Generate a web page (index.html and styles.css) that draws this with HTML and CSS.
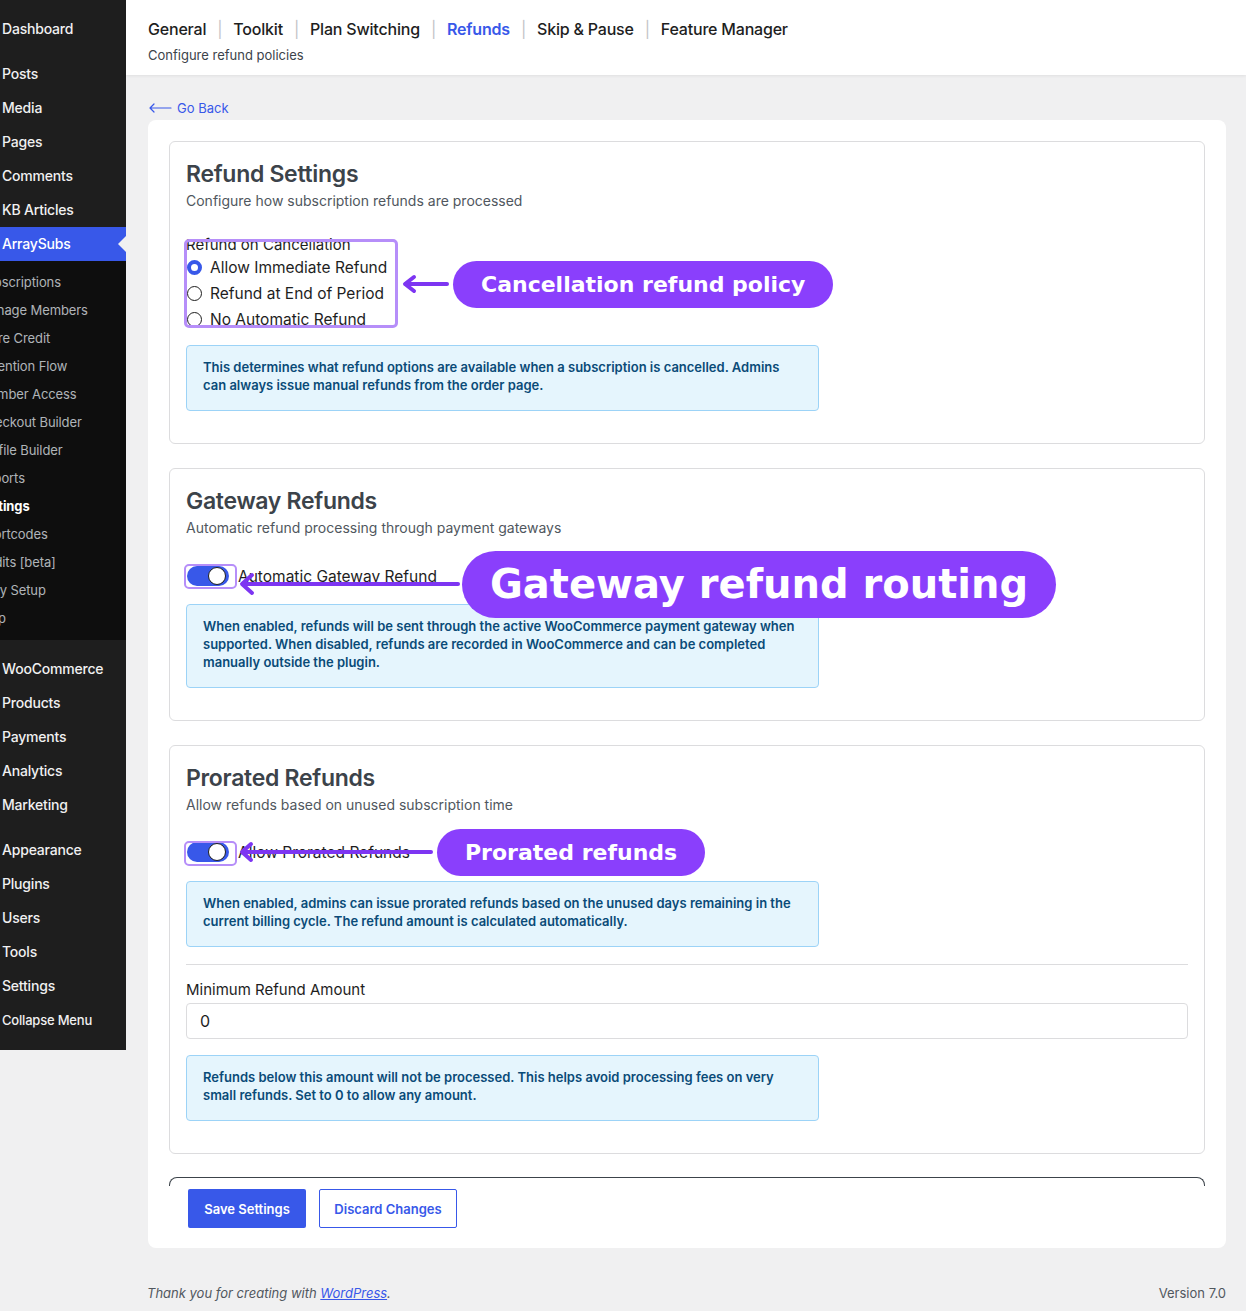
FILE: index.html
```html
<!DOCTYPE html>
<html lang="en">
<head>
<meta charset="utf-8">
<title>Refunds ‹ ArraySubs</title>
<link rel="stylesheet" href="styles.css">
</head>
<body>
<div class="admin">
  <nav class="sidebar">
    <ul class="menu">
      <li class="item">Dashboard</li>
      <li class="sep"></li>
      <li class="item">Posts</li>
      <li class="item">Media</li>
      <li class="item">Pages</li>
      <li class="item">Comments</li>
      <li class="item">KB Articles</li>
      <li class="item current">ArraySubs</li>
      <li>
        <ul class="sub">
          <li>Subscriptions</li>
          <li>Manage Members</li>
          <li>Store Credit</li>
          <li>Retention Flow</li>
          <li>Member Access</li>
          <li>Checkout Builder</li>
          <li>Profile Builder</li>
          <li>Reports</li>
          <li class="on">Settings</li>
          <li>Shortcodes</li>
          <li>Audits [beta]</li>
          <li>Easy Setup</li>
          <li>Help</li>
        </ul>
      </li>
      <li class="sep wide"></li>
      <li class="item">WooCommerce</li>
      <li class="item">Products</li>
      <li class="item">Payments</li>
      <li class="item">Analytics</li>
      <li class="item">Marketing</li>
      <li class="sep"></li>
      <li class="item">Appearance</li>
      <li class="item">Plugins</li>
      <li class="item">Users</li>
      <li class="item">Tools</li>
      <li class="item">Settings</li>
      <li class="item small">Collapse Menu</li>
    </ul>
  </nav>

  <div class="main">
    <header class="topbar">
      <nav class="tabs">
        <a class="tab">General</a><span class="bar">|</span>
        <a class="tab">Toolkit</a><span class="bar">|</span>
        <a class="tab">Plan Switching</a><span class="bar">|</span>
        <a class="tab active">Refunds</a><span class="bar">|</span>
        <a class="tab">Skip &amp; Pause</a><span class="bar">|</span>
        <a class="tab">Feature Manager</a>
      </nav>
      <p class="tagline">Configure refund policies</p>
    </header>

    <div class="content">
      <a class="back">
        <svg width="24" height="10" viewBox="0 0 24 10" aria-hidden="true">
          <path d="M23 5H2M6 1L2 5l4 4" fill="none" stroke="#3858e9" stroke-width="1.2" stroke-linecap="round" stroke-linejoin="round"/>
        </svg>
        <span>Go Back</span>
      </a>

      <div class="panel">
        <section class="card">
          <h2>Refund Settings</h2>
          <p class="desc">Configure how subscription refunds are processed</p>
          <div class="group">
            <div class="group-label">Refund on Cancellation</div>
            <label class="radio"><span class="dot checked"></span>Allow Immediate Refund</label>
            <label class="radio"><span class="dot"></span>Refund at End of Period</label>
            <label class="radio"><span class="dot"></span>No Automatic Refund</label>
          </div>
          <div class="info tight">This determines what refund options are available when a subscription is cancelled. Admins can always issue manual refunds from the order page.</div>
        </section>

        <section class="card">
          <h2>Gateway Refunds</h2>
          <p class="desc">Automatic refund processing through payment gateways</p>
          <div class="toggle-row">
            <span class="switch"><span class="knob"></span></span>
            <span class="toggle-label">Automatic Gateway Refund</span>
          </div>
          <div class="info after-toggle">When enabled, refunds will be sent through the active WooCommerce payment gateway when supported. When disabled, refunds are recorded in WooCommerce and can be completed manually outside the plugin.</div>
        </section>

        <section class="card">
          <h2>Prorated Refunds</h2>
          <p class="desc">Allow refunds based on unused subscription time</p>
          <div class="toggle-row second">
            <span class="switch"><span class="knob"></span></span>
            <span class="toggle-label">Allow Prorated Refunds</span>
          </div>
          <div class="info after-toggle2">When enabled, admins can issue prorated refunds based on the unused days remaining in the current billing cycle. The refund amount is calculated automatically.</div>
          <hr class="rule">
          <label class="field-label" for="min-amount">Minimum Refund Amount</label>
          <input class="field" id="min-amount" type="text" value="0">
          <div class="info after-field">Refunds below this amount will not be processed. This helps avoid processing fees on very small refunds. Set to 0 to allow any amount.</div>
        </section>

        <div class="actions">
          <button class="btn primary">Save Settings</button>
          <button class="btn outline">Discard Changes</button>
        </div>
      </div>

      <footer class="foot">
        <span class="thanks">Thank you for creating with <a>WordPress</a>.</span>
        <span class="version">Version 7.0</span>
      </footer>
    </div>
  </div>
</div>

<div class="notes" aria-hidden="true">
  <div class="mark mark-radios"></div>
  <div class="mark mark-toggle1"></div>
  <div class="mark mark-toggle2"></div>
  <svg class="arrows" width="1246" height="1311" viewBox="0 0 1246 1311">
    <g fill="none" stroke="#7d35f2" stroke-width="4" stroke-linecap="round" stroke-linejoin="round">
      <path d="M447 284H406"/>
      <path d="M414 277l-9 7 9 7"/>
      <path d="M458 584H243"/>
      <path d="M252 575l-10 9 10 9"/>
      <path d="M431 852H243"/>
      <path d="M251 844l-9 8 9 8"/>
    </g>
  </svg>
  <div class="tag tag-policy">Cancellation refund policy</div>
  <div class="tag tag-gateway">Gateway refund routing</div>
  <div class="tag tag-prorated">Prorated refunds</div>
</div>
</body>
</html>
```

FILE: styles.css
```css
* { box-sizing: border-box; }

html, body { margin: 0; }

body {
  position: relative;
  min-height: 1311px;
  background: #f0f0f1;
  color: #1e1e1e;
  font-family: Inter, Roboto, "Liberation Sans", sans-serif;
}

.admin {
  display: flex;
  align-items: flex-start;
}

/* ---------- admin sidebar ---------- */
.sidebar {
  flex: none;
  width: 126px;
  padding: 12px 0 13px;
  background: #1e1e1e;
  overflow: hidden;
}

.menu {
  list-style: none;
  margin: 0 0 0 -34px;
  padding: 0;
  width: 160px;
}

.item {
  position: relative;
  height: 34px;
  line-height: 34px;
  padding-left: 36px;
  font-size: 14px;
  font-weight: 500;
  letter-spacing: -0.2px;
  color: #f0f0f1;
  white-space: nowrap;
}

.item.small { font-size: 13px; }

.item.current {
  background: #3858e9;
  color: #fff;
}

.item.current::after {
  content: "";
  position: absolute;
  right: 0;
  top: 9px;
  border: 8px solid transparent;
  border-right-color: #f0f0f1;
}

.sep { height: 11px; }
.sep.wide { height: 12px; }

.sub {
  list-style: none;
  margin: 0;
  padding: 7px 0 8px;
  background: #0e0e0e;
}

.sub li {
  height: 28px;
  line-height: 28px;
  padding-left: 12px;
  font-size: 13px;
  letter-spacing: -0.1px;
  color: rgba(240, 246, 252, 0.72);
  white-space: nowrap;
}

.sub li.on { color: #fff; font-weight: 700; }

/* ---------- main column ---------- */
.main { flex: 1; min-width: 0; }

.topbar {
  height: 75px;
  padding: 18px 22px 0;
  background: #fff;
  box-shadow: 0 1px 3px rgba(0, 0, 0, 0.07);
}

.tabs {
  display: flex;
  align-items: center;
  height: 22px;
  font-size: 16px;
  font-weight: 500;
  letter-spacing: -0.2px;
}

.tab { color: #1e1e1e; }
.tab.active { color: #3858e9; font-weight: 600; }

.bar {
  margin: 0 11px;
  color: #c3c4c7;
  font-weight: 400;
}

.tagline {
  margin: 6px 0 0;
  font-size: 13px;
  line-height: 18px;
  color: #3c434a;
}

.content { padding: 24px 20px 0 22px; }

.back {
  display: flex;
  align-items: center;
  gap: 5px;
  height: 18px;
  font-size: 13px;
  color: #3858e9;
}

.panel {
  margin-top: 3px;
  padding: 21px 21px 20px;
  background: #fff;
  border-radius: 8px;
}

.card {
  margin-bottom: 24px;
  padding: 16px 16px 32px;
  border: 1px solid #dcdcde;
  border-radius: 6px;
}

.card h2 {
  margin: 0;
  font-size: 23px;
  line-height: 32px;
  font-weight: 600;
  letter-spacing: -0.3px;
  color: #3c434a;
}

.desc {
  margin: 1px 0 0;
  font-size: 14px;
  line-height: 20px;
  color: #50575e;
}

.group { margin-top: 24px; }

.group-label {
  height: 19px;
  font-size: 15px;
  line-height: 19px;
  color: #1e1e1e;
}

.radio {
  display: flex;
  align-items: center;
  gap: 8px;
  height: 26px;
  padding-left: 1px;
  font-size: 15.5px;
  color: #1e1e1e;
}

.dot {
  flex: none;
  width: 15px;
  height: 15px;
  border: 1px solid #1e1e1e;
  border-radius: 50%;
  background: #fff;
}

.dot.checked { border: 4px solid #3858e9; }

.info {
  max-width: 633px;
  padding: 12px 16px 16px;
  background: #e5f5fd;
  border: 1px solid #9cd3f7;
  border-radius: 4px;
  font-size: 13px;
  line-height: 18px;
  font-weight: 600;
  color: #0a4b78;
}

.info.tight { margin-top: 13px; }
.info.after-toggle { margin-top: 18px; }
.info.after-toggle2 { margin-top: 19px; }
.info.after-field { margin-top: 16px; }

.toggle-row {
  display: flex;
  align-items: center;
  height: 20px;
  margin-top: 28px;
}

.toggle-row.second { margin-top: 27px; }

.switch {
  position: relative;
  flex: none;
  width: 42px;
  height: 20px;
  margin-left: 1px;
  border-radius: 10px;
  background: #3858e9;
}

.knob {
  position: absolute;
  right: 3px;
  top: 1px;
  width: 18px;
  height: 18px;
  border: 1.5px solid #1e1e1e;
  border-radius: 50%;
  background: #fff;
}

.toggle-label {
  margin-left: 9px;
  font-size: 15.5px;
  color: #1e1e1e;
}

.rule {
  margin: 17px 0 0;
  border: 0;
  border-top: 1px solid #dcdcde;
}

.field-label {
  display: block;
  margin-top: 15px;
  font-size: 15px;
  line-height: 20px;
}

.field {
  display: block;
  width: 100%;
  height: 36px;
  margin-top: 3px;
  padding: 0 13px;
  border: 1px solid #dcdcde;
  border-radius: 4px;
  font-family: inherit;
  font-size: 16px;
  color: #1e1e1e;
}

.actions {
  position: relative;
  display: flex;
  gap: 13px;
  padding: 11px 0 0 19px;
}

.actions::before {
  content: "";
  position: absolute;
  left: 0;
  right: 0;
  top: -1px;
  height: 8px;
  border: 1px solid #3c434a;
  border-bottom: 0;
  border-radius: 8px 8px 0 0;
}

.btn {
  height: 39px;
  padding: 0;
  border-radius: 2px;
  font-family: inherit;
  font-size: 13px;
  font-weight: 600;
}

.btn.primary {
  width: 118px;
  border: 0;
  background: #3858e9;
  color: #fff;
}

.btn.outline {
  width: 138px;
  border: 1px solid #3858e9;
  background: #fff;
  color: #3858e9;
}

.foot {
  display: flex;
  justify-content: space-between;
  margin: 36px 0 0 -1px;
  font-size: 13px;
  line-height: 18px;
  color: #50575e;
}

.thanks { font-style: italic; }
.thanks a { color: #3858e9; text-decoration: underline; }

/* ---------- annotation layer ---------- */
.notes {
  position: absolute;
  left: 0;
  top: 0;
  width: 1246px;
  height: 1311px;
  pointer-events: none;
}

.arrows { position: absolute; left: 0; top: 0; }

.mark {
  position: absolute;
  border: 3px solid #b68ef9;
  border-radius: 5px;
}

.mark-radios { left: 184px; top: 239px; width: 214px; height: 89px; }
.mark-toggle1 { left: 184px; top: 564px; width: 53px; height: 25px; border-width: 2px; }
.mark-toggle2 { left: 184px; top: 841px; width: 53px; height: 25px; border-width: 2px; }

.tag {
  position: absolute;
  padding: 0 28px;
  border-radius: 999px;
  background: #8a3ffc;
  color: #fff;
  font-family: "DejaVu Sans", sans-serif;
  font-weight: 700;
  white-space: nowrap;
}

.tag-policy { left: 453px; top: 261px; height: 47px; line-height: 47px; font-size: 22px; }
.tag-gateway { left: 462px; top: 551px; height: 67px; line-height: 67px; font-size: 40px; }
.tag-prorated { left: 437px; top: 829px; height: 47px; line-height: 47px; font-size: 22px; }
```
